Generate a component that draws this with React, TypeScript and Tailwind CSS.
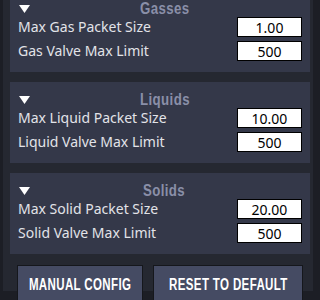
import type { ReactNode } from "react";

const sections = [
  {
    title: "Gasses",
    rows: [
      { label: "Max Gas Packet Size", value: "1.00" },
      { label: "Gas Valve Max Limit", value: "500" },
    ],
  },
  {
    title: "Liquids",
    rows: [
      { label: "Max Liquid Packet Size", value: "10.00" },
      { label: "Liquid Valve Max Limit", value: "500" },
    ],
  },
  {
    title: "Solids",
    rows: [
      { label: "Max Solid Packet Size", value: "20.00" },
      { label: "Solid Valve Max Limit", value: "500" },
    ],
  },
];

const buttons = [
  { label: "MANUAL CONFIG", width: "w-[126px]" },
  { label: "RESET TO DEFAULT", width: "w-[150px]" },
];

function Triangle() {
  return (
    <svg width="11" height="8" viewBox="0 0 11 8" className="shrink-0">
      <polygon points="0,0 11,0 5.5,8" fill="#ffffff" />
    </svg>
  );
}

function Section({ title, children }: { title: string; children: ReactNode }) {
  return (
    <div className="bg-[#343849] px-2 pt-[9px] pb-[11px]">
      <div className="flex items-center h-[17px] pl-[1px]">
        <Triangle />
        <div className="flex-1 flex justify-center pr-[3px]">
          <span className="inline-block scale-x-[0.78] font-['Liberation_Sans',sans-serif] font-bold text-[17px] leading-none text-[#8a8fa8] tracking-[0.5px]">
            {title}
          </span>
        </div>
      </div>
      <div className="flex flex-col gap-1">{children}</div>
    </div>
  );
}

function Row({ label, value }: { label: string; value: string }) {
  return (
    <div className="flex items-center justify-between h-5">
      <span className="font-['Noto_Sans',sans-serif] text-[14px] leading-none text-[#e2e3e8]">{label}</span>
      <input
        readOnly
        value={value}
        className="w-[65px] h-5 bg-white border border-black text-center text-black font-['Noto_Sans',sans-serif] text-[14px] leading-none outline-none"
      />
    </div>
  );
}

export default function App() {
  return (
    <div className="w-[320px] h-[300px] overflow-hidden bg-[#1c1e25] pl-[3px] pr-[7px]">
      <div className="h-full bg-[#252831] pl-[7px] pr-[3px] -mt-[9px]">
        <div className="flex flex-col gap-[10px]">
          {sections.map((s) => (
            <Section key={s.title} title={s.title}>
              {s.rows.map((r) => (
                <Row key={r.label} label={r.label} value={r.value} />
              ))}
            </Section>
          ))}
        </div>
        <div className="flex gap-[10px] pl-[7px] mt-[11px]">
          {buttons.map((b) => (
            <button
              key={b.label}
              className={`${b.width} h-[44px] shrink-0 pt-[11px] flex items-start justify-center border border-[#15171c] bg-[#454b63] text-white`}
            >
              <span className="inline-block whitespace-nowrap scale-x-[0.72] font-['Liberation_Sans',sans-serif] font-bold text-[16px] leading-none tracking-[0.5px]">
                {b.label}
              </span>
            </button>
          ))}
        </div>
      </div>
    </div>
  );
}
